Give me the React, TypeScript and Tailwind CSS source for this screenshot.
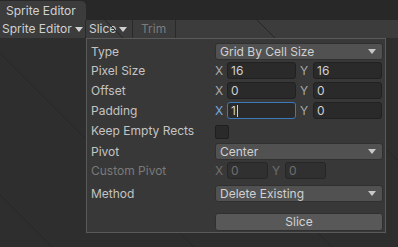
import React from 'react';

const Arrow = ({ className = '' }: { className?: string }) => (
  <svg width="8" height="5" viewBox="0 0 8 5" className={className}>
    <path d="M0 0 L8 0 L4 5 Z" fill="currentColor" />
  </svg>
);

function Dropdown({ value }: { value: string }) {
  return (
    <div className="flex-1 h-[17px] flex items-center justify-between pl-[4px] pr-[6px] bg-[#515151] border border-[#303030] rounded-[3px] text-[#d0d0d0]">
      <span className="leading-none">{value}</span>
      <Arrow className="text-[#c8c8c8]" />
    </div>
  );
}

function Field({ value, w, focused, disabled }: { value: string; w: string; focused?: boolean; disabled?: boolean }) {
  return (
    <div
      className={`${w} h-[17px] flex items-center pl-[3px] rounded-[3px] border ${
        focused ? 'border-[#3a79bb] bg-[#2a2a2a]' : disabled ? 'border-[#262626] bg-[#303030]' : 'border-[#212121] bg-[#2a2a2a]'
      } ${disabled ? 'text-[#6e6e6e]' : 'text-[#d0d0d0]'}`}
    >
      <span className="leading-none">{value}</span>
      {focused && <span className="w-px h-[12px] bg-[#d0d0d0] ml-px" />}
    </div>
  );
}

function XY({ x, y, wide = true, focus = false, disabled = false }: { x: string; y: string; wide?: boolean; focus?: boolean; disabled?: boolean }) {
  const w = wide ? 'w-[69px]' : 'w-[41px]';
  const lab = disabled ? 'text-[#6e6e6e]' : 'text-[#a8a8a8]';
  return (
    <div className="flex items-center">
      <span className={`w-[12px] ${focus ? 'text-[#7aa8e0]' : lab}`}>X</span>
      <Field value={x} w={w} focused={focus} disabled={disabled} />
      <span className={`w-[17px] pl-[4px] ${lab}`}>Y</span>
      <Field value={y} w={w} disabled={disabled} />
    </div>
  );
}

function Row({ label, children, className = '', dim }: { label: string; children: React.ReactNode; className?: string; dim?: boolean }) {
  return (
    <div className={`flex items-center h-[17px] ${className}`}>
      <span className={`w-[124px] ${dim ? 'text-[#7a7a7a]' : 'text-[#c4c4c4]'}`}>{label}</span>
      <div className="flex-1 flex">{children}</div>
    </div>
  );
}

export default function App() {
  return (
    <div className="w-[398px] h-[247px] bg-[#2e2e2e] flex flex-col overflow-hidden text-[12px] text-[#c4c4c4] font-['Inter','Noto_Sans',sans-serif]">
      <div className="h-[20px] bg-[#282828] flex items-end shrink-0">
        <div className="w-[86px] h-[19px] bg-[#3c3c3c] rounded-tr-[5px] flex items-center pl-[6px] text-[#d2d2d2]">
          Sprite Editor
        </div>
      </div>
      <div className="h-[18px] bg-[#3c3c3c] flex items-center shrink-0 text-[#d0d0d0]">
        <div className="w-[86px] h-full flex items-center pl-[2px] gap-[3px] border-r border-[#2a2a2a]">
          <span>Sprite Editor</span>
          <Arrow />
        </div>
        <div className="w-[47px] h-full flex items-center pl-[3px] gap-[3px] border-r border-[#2a2a2a]">
          <span>Slice</span>
          <Arrow />
        </div>
        <div className="w-[43px] h-full flex items-center pl-[8px] text-[#7b7b7b] border-r border-[#2a2a2a]">Trim</div>
      </div>
      <div className="relative flex-1">
        <svg className="absolute left-0 top-[-38px]" width="398" height="247" viewBox="0 0 398 247">
          <g stroke="#262626" strokeWidth="1">
            <line x1="0" y1="53" x2="210" y2="263" />
            <line x1="0" y1="195" x2="60" y2="255" />
            <line x1="237" y1="0" x2="500" y2="263" />
            <line x1="85" y1="0" x2="400" y2="315" />
          </g>
        </svg>
        <div className="absolute left-[86px] top-0 w-[300px] h-[195px] bg-[#383838] border border-[#5a5a5a] pt-[4px] pl-[4px] pr-[2px]">
          <Row label="Type">
            <Dropdown value="Grid By Cell Size" />
          </Row>
          <Row label="Pixel Size" className="mt-[2px]">
            <XY x="16" y="16" />
          </Row>
          <Row label="Offset" className="mt-[3px]">
            <XY x="0" y="0" />
          </Row>
          <Row label="Padding" className="mt-[3px]">
            <XY x="1" y="0" focus />
          </Row>
          <Row label="Keep Empty Rects" className="mt-[3px] h-[18px]">
            <div className="w-[14px] h-[14px] mt-[2px] bg-[#2a2a2a] border border-[#1f1f1f] rounded-[2px]" />
          </Row>
          <Row label="Pivot" className="mt-[3px]">
            <Dropdown value="Center" />
          </Row>
          <Row label="Custom Pivot" className="mt-[2px]" dim>
            <XY x="0" y="0" wide={false} disabled />
          </Row>
          <Row label="Method" className="mt-[6px]">
            <Dropdown value="Delete Existing" />
          </Row>
          <div className="flex mt-[11px]">
            <div className="w-[124px]" />
            <div className="flex-1 h-[18px] flex items-center justify-center bg-[#585858] border border-[#303030] rounded-[3px] text-[#d4d4d4]">
              Slice
            </div>
          </div>
        </div>
      </div>
    </div>
  );
}
